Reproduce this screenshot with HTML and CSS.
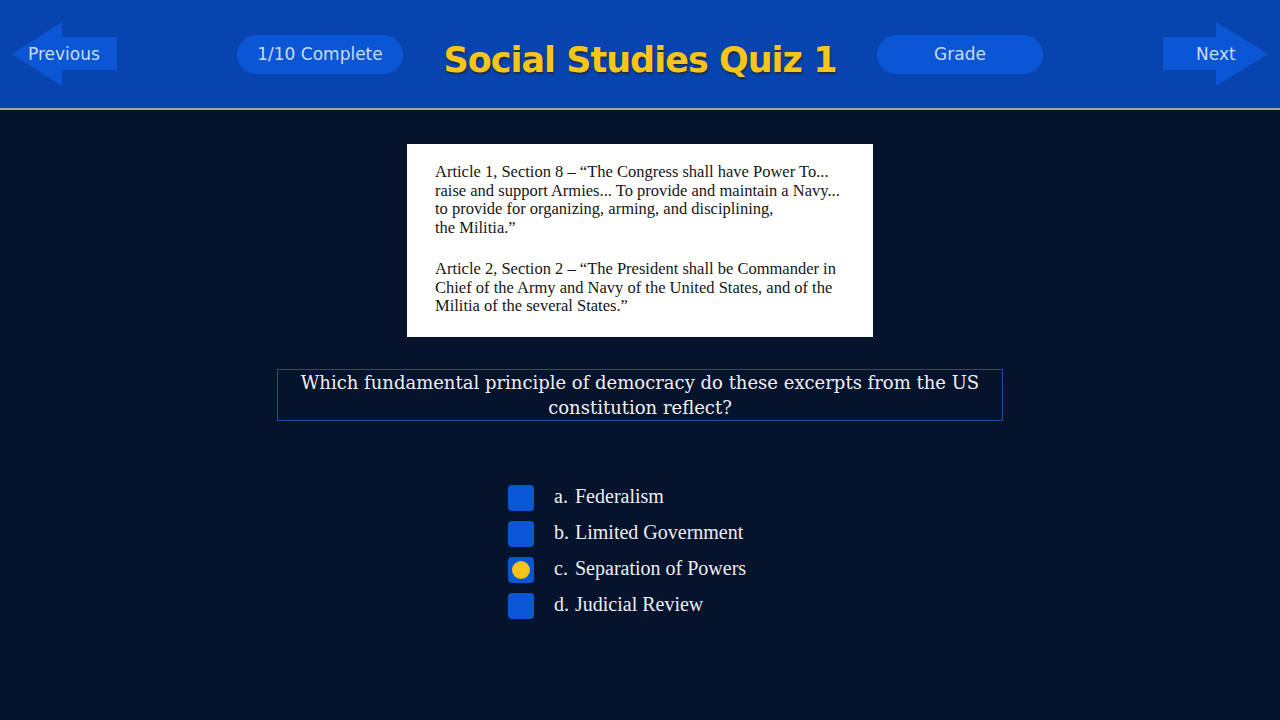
FILE: index.html
```html
<!DOCTYPE html>
<html>
<head>
<meta charset="utf-8">
<link rel="stylesheet" href="styles.css">
</head>
<body>
<header class="topbar">
  <div class="arrow arrow-prev">
    <svg class="arrow-shape" width="105" height="64" viewBox="0 0 105 64"><polygon points="0,32 50,0 50,15 105,15 105,48 50,48 50,64" /></svg>
    <span class="arrow-label">Previous</span>
  </div>
  <div class="pill pill-left">1/10 Complete</div>
  <h1 class="title">Social Studies Quiz 1</h1>
  <div class="pill pill-right">Grade</div>
  <div class="arrow arrow-next">
    <svg class="arrow-shape" width="105" height="64" viewBox="0 0 105 64"><polygon points="105,32 53,0 53,15 0,15 0,48 53,48 53,64" /></svg>
    <span class="arrow-label">Next</span>
  </div>
</header>
<main class="content">
  <section class="excerpt">
    <p>Article 1, Section 8 – “The Congress shall have Power To...<br>raise and support Armies... To provide and maintain a Navy...<br>to provide for organizing, arming, and disciplining,<br>the Militia.”</p>
    <p>Article 2, Section 2 – “The President shall be Commander in<br>Chief of the Army and Navy of the United States, and of the<br>Militia of the several States.”</p>
  </section>
  <div class="question">Which fundamental principle of democracy do these excerpts from the US constitution reflect?</div>
  <ul class="options">
    <li class="option"><span class="box"></span><span class="letter">a.</span><span class="label">Federalism</span></li>
    <li class="option"><span class="box"></span><span class="letter">b.</span><span class="label">Limited Government</span></li>
    <li class="option"><span class="box selected"><span class="dot"></span></span><span class="letter">c.</span><span class="label">Separation of Powers</span></li>
    <li class="option"><span class="box"></span><span class="letter">d.</span><span class="label">Judicial Review</span></li>
  </ul>
</main>
</body>
</html>
```
FILE: styles.css
```css
* { box-sizing: border-box; }
html, body { margin: 0; padding: 0; }
body {
  width: 1280px;
  height: 720px;
  background: #06132d;
  overflow: hidden;
  font-family: "Liberation Serif", serif;
}
.topbar {
  height: 110px;
  background: #0744b0;
  border-bottom: 2px solid #a8a99a;
  display: flex;
  align-items: center;
  padding: 0 12px;
}
.arrow {
  position: relative;
  width: 105px;
  height: 64px;
  flex: none;
}
.arrow-shape { display: block; fill: #0b56d4; }
.arrow-label {
  position: absolute;
  top: 0;
  bottom: 0;
  display: flex;
  align-items: center;
  font-family: "DejaVu Sans", sans-serif;
  font-size: 17px;
  color: #c9dcf4;
}
.arrow-prev .arrow-label { left: 16px; }
.arrow-next .arrow-label { left: 33px; }
.pill {
  flex: none;
  width: 166px;
  height: 39px;
  border-radius: 20px;
  background: #0b56d4;
  color: #c9dcf4;
  font-family: "DejaVu Sans", sans-serif;
  font-size: 17px;
  display: flex;
  align-items: center;
  justify-content: center;
}
.pill-left { margin-left: 120px; }
.pill-right { margin-right: 120px; }
.title {
  flex: 1;
  margin: 0;
  text-align: center;
  font-family: "DejaVu Sans", sans-serif;
  font-weight: bold;
  font-size: 35px;
  letter-spacing: -1px;
  color: #f6c51c;
  text-shadow: 1px 2px 2px #1c2a4a;
  padding-top: 12px;
}
.content {
  display: flex;
  flex-direction: column;
  align-items: center;
  padding-top: 34px;
}
.excerpt {
  width: 466px;
  height: 193px;
  background: #ffffff;
  padding: 19px 10px 0 28px;
  color: #161616;
  font-size: 16.5px;
  line-height: 18.7px;
  white-space: nowrap;
}
.excerpt p { margin: 0 0 22px; }
.question {
  margin-top: 32px;
  width: 726px;
  height: 52px;
  border: 1px solid #1d4d9e;
  color: #eef0f4;
  font-family: "DejaVu Serif", serif;
  font-size: 18px;
  line-height: 25px;
  text-align: center;
  padding: 0 20px;
}
.options {
  list-style: none;
  margin: 64px 0 0;
  padding: 0;
  width: 264px;
}
.option {
  display: flex;
  align-items: center;
  height: 26px;
  margin-bottom: 10px;
  color: #eceef2;
  font-size: 20px;
  line-height: 24px;
  white-space: nowrap;
}
.box {
  width: 26px;
  height: 26px;
  border-radius: 4px;
  background: #0b56d4;
  margin-right: 20px;
  display: flex;
  align-items: center;
  justify-content: center;
  flex: none;
}
.dot {
  width: 18px;
  height: 18px;
  border-radius: 50%;
  background: #f6c21f;
}
.letter { display: inline-block; width: 21px; padding-bottom: 4px; }
.label { display: inline-block; padding-bottom: 4px; }
```
